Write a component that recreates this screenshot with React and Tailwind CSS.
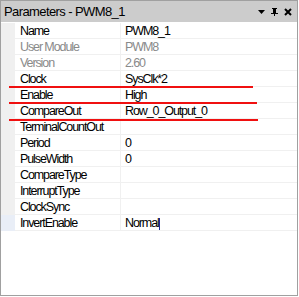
import { useState } from "react";

const rows = [
  { name: "Name", value: "PWM8_1" },
  { name: "User Module", value: "PWM8", dim: true },
  { name: "Version", value: "2.60", dim: true },
  { name: "Clock", value: "SysClk*2" },
  { name: "Enable", value: "High" },
  { name: "CompareOut", value: "Row_0_Output_0" },
  { name: "TerminalCountOut", value: "" },
  { name: "Period", value: "0" },
  { name: "PulseWidth", value: "0" },
  { name: "CompareType", value: "" },
  { name: "InterruptType", value: "" },
  { name: "ClockSync", value: "" },
  { name: "InvertEnable", value: "Normal", editing: true },
];

function TitleButtons() {
  return (
    <div className="flex items-center gap-[6px] pr-[5px]">
      <svg width="7" height="4" viewBox="0 0 7 4">
        <path d="M0 0h7L3.5 4z" fill="#000" />
      </svg>
      <svg width="7" height="8" viewBox="0 0 7 8">
        <path d="M1 0h5v1H5v4h2v1H4v2H3V6H0V5h2V1H1z" fill="#000" />
        <path d="M4 1h1v4H4z" fill="#000" />
      </svg>
      <svg width="8" height="8" viewBox="0 0 8 8">
        <path d="M1 1l6 6M7 1L1 7" stroke="#000" strokeWidth="2" />
      </svg>
    </div>
  );
}

export default function App() {
  const [selected] = useState("InvertEnable");
  return (
    <div className="w-[299px] h-[297px] bg-white font-['Liberation_Sans',Arial,sans-serif]">
      <div className="relative w-[298px] h-[296px] border border-[#a0a0a0] flex flex-col">
        {/* title bar */}
        <div className="h-[21px] bg-[#cccccc] flex items-center justify-between shrink-0">
          <span className="pl-[3px] text-[13px] tracking-[-0.6px] text-black">
            Parameters - PWM8_1
          </span>
          <TitleButtons />
        </div>
        {/* property grid */}
        <div className="pt-[1px]">
          {rows.map((r) => (
            <div key={r.name} className="flex h-[16px] text-[12.5px] leading-[16px] tracking-[-1.1px]">
              <div
                className={
                  "w-[14px] shrink-0 " +
                  (r.name === selected ? "bg-[#e9eef7]" : "bg-[#f0f0f0]")
                }
              />
              <div
                className={
                  "w-[106px] shrink-0 pl-[5px] border-b border-r border-[#f0f0f0] whitespace-nowrap " +
                  (r.dim ? "text-[#8a8a8a]" : "text-black")
                }
              >
                {r.name}
              </div>
              <div
                className={
                  "flex-1 pl-[4px] border-b border-[#f0f0f0] whitespace-nowrap " +
                  (r.dim ? "text-[#8a8a8a]" : "text-black")
                }
              >
                {r.value}
                {r.editing && (
                  <span className="inline-block align-middle w-[1px] h-[12px] bg-[#1a2a9a]" />
                )}
              </div>
            </div>
          ))}
        </div>
        {/* red annotation underlines */}
        <div className="absolute left-[8px] top-[85px] w-[244px] h-[2px] bg-[#f01010]" />
        <div className="absolute left-[8px] top-[101px] w-[248px] h-[2px] bg-[#f01010]" />
        <div className="absolute left-[8px] top-[118px] w-[249px] h-[2px] bg-[#f01010]" />
      </div>
    </div>
  );
}
